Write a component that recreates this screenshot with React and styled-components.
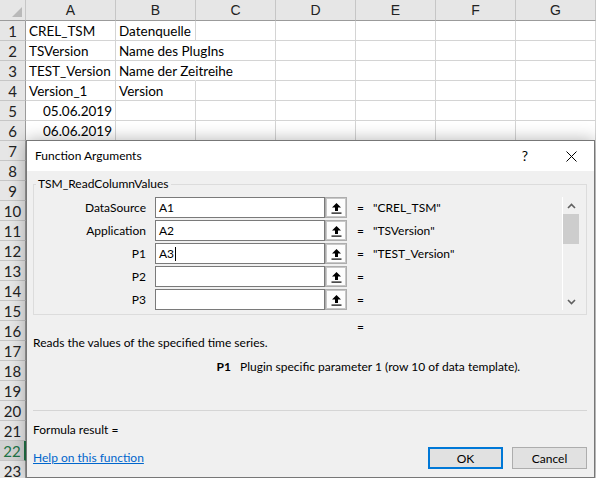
import React from 'react';
import styled, { createGlobalStyle } from 'styled-components';

const GlobalStyle = createGlobalStyle`
  html, body {
    margin: 0;
    padding: 0;
    background: #fff;
    overflow: hidden;
  }
`;

const Page = styled.div`
  position: relative;
  width: 596px;
  height: 478px;
  overflow: hidden;
`;

/* ---------- spreadsheet ---------- */

const Sheet = styled.div`
  display: grid;
  grid-template-columns: 26px 90px repeat(6, 80px);
  grid-template-rows: 21px repeat(23, 20px);
  background: #fff;
  font-family: Lato, "Liberation Sans", sans-serif;
  color: #000;
`;

const Corner = styled.div`
  position: relative;
  background: #e6e6e6;
  border-right: 1px solid #c6c6c6;
  border-bottom: 1px solid #9b9b9b;

  &::after {
    content: '';
    position: absolute;
    right: 3px;
    bottom: 3px;
    border-style: solid;
    border-width: 0 0 10px 10px;
    border-color: transparent transparent #b9b9b9 transparent;
  }
`;

const ColHead = styled.div`
  display: flex;
  align-items: center;
  justify-content: center;
  background: #e6e6e6;
  border-right: 1px solid #c6c6c6;
  border-bottom: 1px solid #9b9b9b;
  font-family: "Liberation Sans", sans-serif;
  font-size: 14px;
  color: #222;
`;

const RowHead = styled.div`
  display: flex;
  align-items: center;
  justify-content: center;
  box-sizing: border-box;
  background: ${p => (p.$active ? '#d2d2d2' : '#e6e6e6')};
  color: ${p => (p.$active ? '#217346' : '#222')};
  border-right: ${p => (p.$active ? '2px solid #217346' : '1px solid #9b9b9b')};
  border-bottom: 1px solid #c6c6c6;
  font-size: 15px;
`;

const Cell = styled.div`
  display: flex;
  align-items: center;
  justify-content: ${p => (p.$right ? 'flex-end' : 'flex-start')};
  padding: 0 3px;
  border-right: 1px solid ${p => (p.$spill ? 'transparent' : '#d4d4d4')};
  border-bottom: 1px solid #d4d4d4;
  font-size: 13.5px;
  white-space: nowrap;
  min-width: 0;
`;

/* ---------- dialog ---------- */

const Dialog = styled.div`
  position: absolute;
  left: 26px;
  top: 140px;
  width: 569px;
  height: 338px;
  box-sizing: border-box;
  border: 1px solid #777;
  background: #f0f0f0;
  box-shadow: 0 0 16px rgba(0, 0, 0, 0.3);
  display: flex;
  flex-direction: column;
  font-family: Lato, "Noto Sans", sans-serif;
  font-size: 12px;
  line-height: 16px;
  color: #000;
`;

const TitleBar = styled.div`
  height: 30px;
  flex: none;
  display: flex;
  align-items: center;
  background: #fff;
  padding-left: 8px;
`;

const Title = styled.div`
  flex: 1;
`;

const TitleButton = styled.div`
  width: 46px;
  height: 30px;
  display: flex;
  align-items: center;
  justify-content: center;
  font-size: 14px;
`;

const Body = styled.div`
  flex: 1;
  display: flex;
  flex-direction: column;
  padding: 0 7px 0 6px;
`;

const GroupBox = styled.fieldset`
  margin: 5px 0 0;
  padding: 5px 7px 4px 0;
  border: 1px solid #dcdcdc;
  min-width: 0;
`;

const Legend = styled.legend`
  margin-left: 2px;
  padding: 0 2px;
  font-size: 12px;
  line-height: 16px;
`;

const ArgPane = styled.div`
  display: flex;
  height: 113px;
`;

const ArgList = styled.div`
  flex: 1;
  display: flex;
  flex-direction: column;
  gap: 2px;
  overflow: hidden;
`;

const ArgRow = styled.div`
  display: flex;
  align-items: center;
  height: 21px;
  flex: none;
`;

const ArgLabel = styled.div`
  width: 112px;
  margin-right: 9px;
  text-align: right;
`;

const RefBox = styled.div`
  display: flex;
  width: 192px;
  height: 21px;
`;

const TextBox = styled.div`
  flex: 1;
  box-sizing: border-box;
  display: flex;
  align-items: center;
  border: 1px solid #7a7a7a;
  background: #fff;
  padding-left: 3px;
`;

const Caret = styled.span`
  display: inline-block;
  width: 1px;
  height: 14px;
  margin-left: 1px;
  background: #000;
`;

const RefButton = styled.div`
  width: 22px;
  height: 21px;
  box-sizing: border-box;
  display: flex;
  align-items: center;
  justify-content: center;
  border: 2px solid #c8c8c8;
  outline: 1px solid #adadad;
  outline-offset: -1px;
  background: #fdfdfd;
`;

const Eq = styled.div`
  width: 16px;
  margin-left: 10px;
`;

const ArgValue = styled.div`
  flex: 1;
  white-space: nowrap;
`;

const ScrollBar = styled.div`
  width: 16px;
  border-left: 1px solid #fff;
  display: flex;
  flex-direction: column;
  align-items: stretch;
`;

const ScrollArrow = styled.div`
  height: 17px;
  display: flex;
  align-items: center;
  justify-content: center;
`;

const ScrollThumb = styled.div`
  height: 30px;
  background: #cdcdcd;
`;

const ScrollTrack = styled.div`
  flex: 1;
`;

const ResultRow = styled.div`
  margin-top: 4px;
  padding-left: 324px;
`;

const Description = styled.div``;

const ParamHelp = styled.div`
  display: grid;
  grid-template-columns: 198px 1fr;
  column-gap: 9px;
  margin-top: 8px;
`;

const ParamName = styled.div`
  text-align: right;
  font-weight: bold;
`;

const Separator = styled.div`
  height: 1px;
  margin-top: 35px;
  background: #d5d5d5;
`;

const FormulaResult = styled.div`
  margin-top: 11px;
`;

const Footer = styled.div`
  margin-top: 9px;
  display: flex;
  align-items: center;
  justify-content: space-between;
`;

const HelpLink = styled.a`
  color: #0066cc;
  text-decoration: underline;
  cursor: pointer;
`;

const ButtonRow = styled.div`
  display: flex;
  gap: 9px;
`;

const DialogButton = styled.button`
  width: 75px;
  height: 22px;
  box-sizing: border-box;
  padding: 0;
  background: #e1e1e1;
  border: ${p => (p.$primary ? '2px solid #0078d7' : '1px solid #adadad')};
  font-family: inherit;
  font-size: 12px;
  color: #000;
`;

/* ---------- icons ---------- */

const RefIcon = () => (
  <svg width="11" height="12" viewBox="0 0 11 12">
    <path d="M5.5 1 L10 5.5 L7 5.5 L7 9 L4 9 L4 5.5 L1 5.5 Z" fill="#000" />
    <rect x="0.5" y="10.5" width="10" height="1.2" fill="#000" />
  </svg>
);

const CloseIcon = () => (
  <svg width="11" height="11" viewBox="0 0 11 11">
    <path d="M0.5 0.5 L10.5 10.5 M10.5 0.5 L0.5 10.5" stroke="#000" strokeWidth="1" />
  </svg>
);

const Chevron = ({ down }) => (
  <svg width="9" height="6" viewBox="0 0 9 6">
    <polyline
      points={down ? '1,1 4.5,4.5 8,1' : '1,5 4.5,1.5 8,5'}
      fill="none"
      stroke="#606060"
      strokeWidth="1.6"
    />
  </svg>
);

/* ---------- data ---------- */

const columns = ['A', 'B', 'C', 'D', 'E', 'F', 'G'];

const cells = {
  1: { A: 'CREL_TSM', B: 'Datenquelle' },
  2: { A: 'TSVersion', B: 'Name des PlugIns' },
  3: { A: 'TEST_Version', B: 'Name der Zeitreihe' },
  4: { A: 'Version_1', B: 'Version' },
  5: { A: '05.06.2019' },
  6: { A: '06.06.2019' },
};

const rightAligned = { 5: true, 6: true };
const spills = { 2: true, 3: true };

const args = [
  { name: 'DataSource', ref: 'A1', value: '"CREL_TSM"' },
  { name: 'Application', ref: 'A2', value: '"TSVersion"' },
  { name: 'P1', ref: 'A3', value: '"TEST_Version"', focused: true },
  { name: 'P2', ref: '', value: '' },
  { name: 'P3', ref: '', value: '' },
];

export default function App() {
  const rows = Array.from({ length: 23 }, (_, i) => i + 1);

  return (
    <Page>
      <GlobalStyle />
      <Sheet>
        <Corner />
        {columns.map(c => (
          <ColHead key={c}>{c}</ColHead>
        ))}
        {rows.map(r => (
          <React.Fragment key={r}>
            <RowHead $active={r === 22}>{r}</RowHead>
            {columns.map(c => (
              <Cell
                key={c}
                $right={c === 'A' && rightAligned[r]}
                $spill={c === 'B' && spills[r]}
              >
                {cells[r] && cells[r][c]}
              </Cell>
            ))}
          </React.Fragment>
        ))}
      </Sheet>

      <Dialog>
        <TitleBar>
          <Title>Function Arguments</Title>
          <TitleButton>?</TitleButton>
          <TitleButton>
            <CloseIcon />
          </TitleButton>
        </TitleBar>
        <Body>
          <GroupBox>
            <Legend>TSM_ReadColumnValues</Legend>
            <ArgPane>
              <ArgList>
                {args.map(a => (
                  <ArgRow key={a.name}>
                    <ArgLabel>{a.name}</ArgLabel>
                    <RefBox>
                      <TextBox>
                        {a.ref}
                        {a.focused && <Caret />}
                      </TextBox>
                      <RefButton>
                        <RefIcon />
                      </RefButton>
                    </RefBox>
                    <Eq>=</Eq>
                    <ArgValue>{a.value}</ArgValue>
                  </ArgRow>
                ))}
              </ArgList>
              <ScrollBar>
                <ScrollArrow>
                  <Chevron />
                </ScrollArrow>
                <ScrollThumb />
                <ScrollTrack />
                <ScrollArrow>
                  <Chevron down />
                </ScrollArrow>
              </ScrollBar>
            </ArgPane>
          </GroupBox>
          <ResultRow>=</ResultRow>
          <Description>Reads the values of the specified time series.</Description>
          <ParamHelp>
            <ParamName>P1</ParamName>
            <div>Plugin specific parameter 1 (row 10 of data template).</div>
          </ParamHelp>
          <Separator />
          <FormulaResult>Formula result =</FormulaResult>
          <Footer>
            <HelpLink>Help on this function</HelpLink>
            <ButtonRow>
              <DialogButton $primary>OK</DialogButton>
              <DialogButton>Cancel</DialogButton>
            </ButtonRow>
          </Footer>
        </Body>
      </Dialog>
    </Page>
  );
}
